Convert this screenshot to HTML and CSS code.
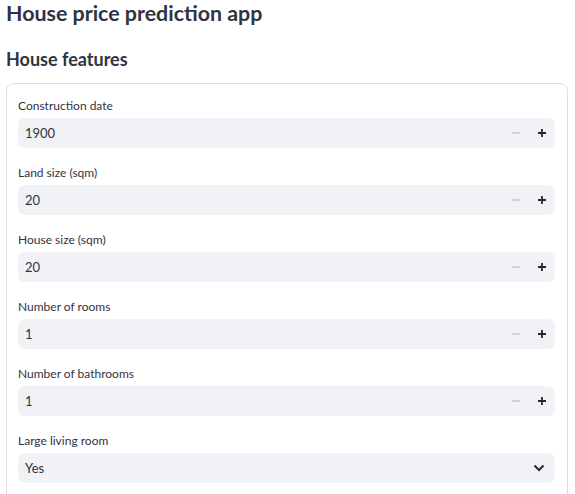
FILE: index.html
```html
<!DOCTYPE html>
<html>
<head>
<meta charset="utf-8">
<link rel="stylesheet" href="styles.css">
</head>
<body>
<h1 class="title">House price prediction app</h1>
<h2 class="subtitle">House features</h2>
<div class="form">
  <div class="field">
    <div class="label">Construction date</div>
    <div class="input">
      <span class="value">1900</span>
      <span class="btn minus"><svg width="10" height="10" viewBox="0 0 10 10"><path d="M1 5h8" stroke="#c9cbd2" stroke-width="1.6"/></svg></span>
      <span class="btn plus"><svg width="10" height="10" viewBox="0 0 10 10"><path d="M1 5h8M5 1v8" stroke="#262730" stroke-width="1.8"/></svg></span>
    </div>
  </div>
  <div class="field">
    <div class="label">Land size (sqm)</div>
    <div class="input">
      <span class="value">20</span>
      <span class="btn minus"><svg width="10" height="10" viewBox="0 0 10 10"><path d="M1 5h8" stroke="#c9cbd2" stroke-width="1.6"/></svg></span>
      <span class="btn plus"><svg width="10" height="10" viewBox="0 0 10 10"><path d="M1 5h8M5 1v8" stroke="#262730" stroke-width="1.8"/></svg></span>
    </div>
  </div>
  <div class="field">
    <div class="label">House size (sqm)</div>
    <div class="input">
      <span class="value">20</span>
      <span class="btn minus"><svg width="10" height="10" viewBox="0 0 10 10"><path d="M1 5h8" stroke="#c9cbd2" stroke-width="1.6"/></svg></span>
      <span class="btn plus"><svg width="10" height="10" viewBox="0 0 10 10"><path d="M1 5h8M5 1v8" stroke="#262730" stroke-width="1.8"/></svg></span>
    </div>
  </div>
  <div class="field">
    <div class="label">Number of rooms</div>
    <div class="input">
      <span class="value">1</span>
      <span class="btn minus"><svg width="10" height="10" viewBox="0 0 10 10"><path d="M1 5h8" stroke="#c9cbd2" stroke-width="1.6"/></svg></span>
      <span class="btn plus"><svg width="10" height="10" viewBox="0 0 10 10"><path d="M1 5h8M5 1v8" stroke="#262730" stroke-width="1.8"/></svg></span>
    </div>
  </div>
  <div class="field">
    <div class="label">Number of bathrooms</div>
    <div class="input">
      <span class="value">1</span>
      <span class="btn minus"><svg width="10" height="10" viewBox="0 0 10 10"><path d="M1 5h8" stroke="#c9cbd2" stroke-width="1.6"/></svg></span>
      <span class="btn plus"><svg width="10" height="10" viewBox="0 0 10 10"><path d="M1 5h8M5 1v8" stroke="#262730" stroke-width="1.8"/></svg></span>
    </div>
  </div>
  <div class="field">
    <div class="label">Large living room</div>
    <div class="input select">
      <span class="value">Yes</span>
      <span class="chev"><svg width="12" height="8" viewBox="0 0 12 8"><path d="M1.5 1.5L6 6l4.5-4.5" fill="none" stroke="#262730" stroke-width="2"/></svg></span>
    </div>
  </div>
</div>
</body>
</html>
```
FILE: styles.css
```css
html, body {
  margin: 0;
  padding: 0;
  background: #ffffff;
}
body {
  padding: 0 6px;
  font-family: "Lato", "Noto Sans", sans-serif;
  color: #31333f;
  overflow: hidden;
}
.title {
  margin: 0;
  font-size: 21.4px;
  line-height: 26px;
  font-weight: 700;
}
.subtitle {
  margin: 21px 0 0 0;
  font-size: 18px;
  line-height: 24px;
  font-weight: 700;
}
.form {
  margin-top: 12px;
  width: 537px;
  border: 1px solid rgba(49, 51, 63, 0.16);
  border-radius: 8px;
  padding: 14px 12px 20px 11px;
  display: flex;
  flex-direction: column;
  gap: 17px;
}
.field {
  display: flex;
  flex-direction: column;
}
.label {
  font-size: 12px;
  line-height: 16px;
  height: 20px;
}
.input {
  height: 30px;
  background: #f0f2f6;
  border-radius: 7px;
  display: flex;
  align-items: center;
}
.value {
  flex: 1;
  padding-left: 7px;
  font-size: 13px;
  color: #31333f;
}
.btn {
  width: 26px;
  display: flex;
  justify-content: center;
  align-items: center;
}
.chev {
  display: flex;
  margin-right: 10px;
}
```
